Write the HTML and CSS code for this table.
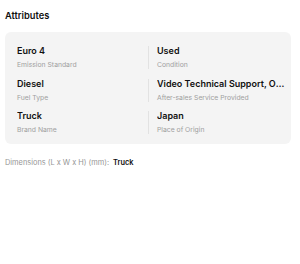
FILE: index.html
```html
<!DOCTYPE html>
<html>
<head>
<meta charset="utf-8">
<link rel="stylesheet" href="styles.css">
</head>
<body>
<div class="page">
  <h2 class="title">Attributes</h2>
  <div class="card">
    <div class="cell"><div class="value">Euro 4</div><div class="label">Emission Standard</div></div>
    <div class="cell right"><div class="value">Used</div><div class="label">Condition</div></div>
    <div class="cell"><div class="value">Diesel</div><div class="label">Fuel Type</div></div>
    <div class="cell right"><div class="value">Video Technical Support, Online Support</div><div class="label">After-sales Service Provided</div></div>
    <div class="cell"><div class="value">Truck</div><div class="label">Brand Name</div></div>
    <div class="cell right"><div class="value">Japan</div><div class="label">Place of Origin</div></div>
  </div>
  <div class="dims"><span class="dims-label">Dimensions (L x W x H) (mm):</span><span class="dims-value">Truck</span></div>
</div>
</body>
</html>
```
FILE: styles.css
```css
* { box-sizing: border-box; }
html, body { margin: 0; padding: 0; background: #fff; }
body { font-family: Inter, "Noto Sans", sans-serif; color: #111; }
.page { padding: 10px 9px 0 5px; }
.title {
  margin: 0;
  font-size: 9.3px;
  line-height: 12px;
  font-weight: 600;
  color: #111;
}
.card {
  margin-top: 10px;
  background: #f4f4f4;
  border-radius: 6px;
  padding: 14px 5px 10px 12px;
  display: grid;
  grid-template-columns: 131px 1fr;
  row-gap: 9.5px;
}
.cell { min-width: 0; height: 23px; }
.cell.right { border-left: 1px solid #e2e2e2; padding-left: 8px; }
.value {
  font-size: 9px;
  line-height: 10px;
  font-weight: 600;
  color: #111;
  white-space: nowrap;
  overflow: hidden;
  text-overflow: ellipsis;
}
.label {
  margin-top: 5px;
  font-size: 6.8px;
  line-height: 8px;
  color: #a0a0a0;
  white-space: nowrap;
}
.dims {
  margin-top: 14px;
  font-size: 7.4px;
  line-height: 10px;
  display: flex;
  gap: 4px;
}
.dims-label { color: #959595; }
.dims-value { font-weight: 600; color: #111; }
```
